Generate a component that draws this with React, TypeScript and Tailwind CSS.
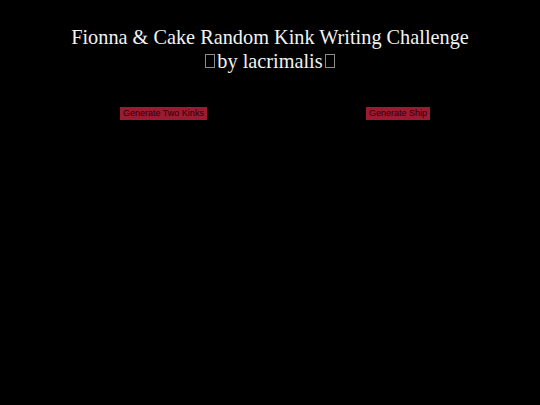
export default function App() {
  return (
    <div className="min-h-[405px] bg-black font-['Liberation_Serif',serif] text-[#f2f2f2]">
      <h1 className="pt-[25px] text-center text-[20.3px] leading-[24px] font-normal">
        Fionna &amp; Cake Random Kink Writing Challenge
        <br />
        <span className="mr-[2px] inline-block h-[14px] w-[10px] border border-[#8c8c8c]" />
        by lacrimalis
        <span className="ml-[2px] inline-block h-[14px] w-[10px] border border-[#8c8c8c]" />
      </h1>
      <div className="mt-[34px] flex gap-[159px] pl-[120px] font-['Liberation_Sans',Arial,sans-serif] text-[9px]">
        <button className="h-[13px] bg-[#9c1b31] px-[3px] leading-[13px] text-[#2a0008]">Generate Two Kinks</button>
        <button className="h-[13px] bg-[#9c1b31] px-[3px] leading-[13px] text-[#2a0008]">Generate Ship</button>
      </div>
    </div>
  )
}
